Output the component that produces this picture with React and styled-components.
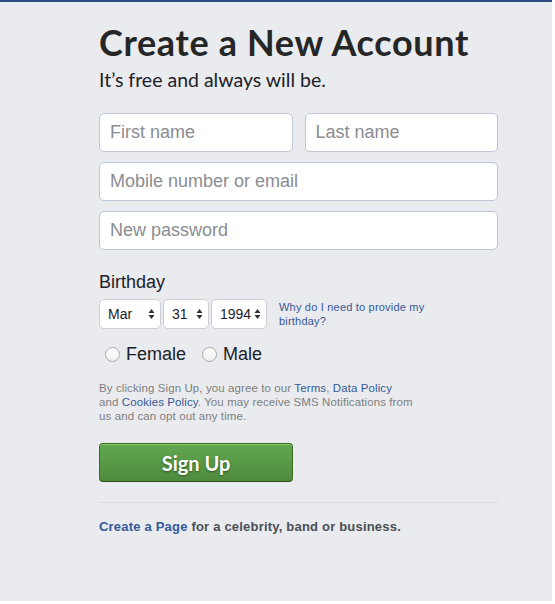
import React from 'react';
import styled, { createGlobalStyle } from 'styled-components';

const GlobalStyle = createGlobalStyle`
  html, body {
    margin: 0;
    padding: 0;
    background: #ffffff;
  }
`;

const Page = styled.div`
  width: calc(100% - 3px);
  height: 601px;
  box-sizing: border-box;
  background: #e9ebee;
  border-top: 2px solid #2d4b86;
  padding: 18px 0 0 99px;
  font-family: "Liberation Sans", Arial, sans-serif;
  color: #1d2129;
`;

const Form = styled.div`
  width: 399px;
  display: flex;
  flex-direction: column;
`;

const Title = styled.h1`
  margin: 0;
  font-family: Lato, "Open Sans", sans-serif;
  font-weight: 700;
  font-size: 36px;
  line-height: 44px;
  color: #262626;
  letter-spacing: 0.65px;
`;

const Subtitle = styled.p`
  margin: 4px 0 21px;
  font-family: Lato, "Open Sans", sans-serif;
  font-size: 19.5px;
  line-height: 24px;
  color: #1d2129;
`;

const Row = styled.div`
  display: flex;
  gap: 12px;
  margin-bottom: 10px;
`;

const TextInput = styled.input`
  flex: 1;
  min-width: 0;
  height: 39px;
  box-sizing: border-box;
  border: 1px solid #bdc7d8;
  border-radius: 5px;
  background: #ffffff;
  padding: 0 10px;
  font-family: "Liberation Sans", Arial, sans-serif;
  font-size: 18px;
  color: #1d2129;
  outline: none;

  &::placeholder {
    color: #8a8d91;
  }
`;

const Label = styled.div`
  margin-top: 10px;
  font-size: 18px;
  line-height: 24px;
  color: #1d2129;
`;

const BirthdayRow = styled.div`
  display: flex;
  align-items: center;
  gap: 2px;
  margin-top: 5px;
`;

const SelectBox = styled.div`
  width: ${p => p.$w}px;
  height: 30px;
  box-sizing: border-box;
  border: 1px solid #ccd0d5;
  border-radius: 5px;
  background: #ffffff;
  display: flex;
  align-items: center;
  justify-content: space-between;
  padding: 0 5px 0 8px;
  font-size: 14px;
  color: #1d2129;
`;

const Why = styled.a`
  margin-left: 10px;
  width: 165px;
  font-size: 11px;
  line-height: 14px;
  color: #365899;
  text-decoration: none;
  letter-spacing: 0.2px;
`;

const Genders = styled.div`
  display: flex;
  gap: 16px;
  margin: 13px 0 0 6px;
`;

const Gender = styled.label`
  display: flex;
  align-items: center;
  gap: 6px;
  font-size: 18px;
  line-height: 24px;
  color: #1d2129;
`;

const Radio = styled.span`
  width: 13px;
  height: 13px;
  border-radius: 50%;
  border: 1px solid #a8a8a8;
  background: linear-gradient(#ffffff, #f0f0f0);
`;

const Terms = styled.p`
  margin: 15px 0 0;
  font-size: 11.5px;
  line-height: 14px;
  color: #7f7f7f;
  letter-spacing: 0.1px;

  a {
    color: #365899;
    text-decoration: none;
  }
`;

const SignUp = styled.button`
  margin-top: 20px;
  width: 194px;
  height: 39px;
  box-sizing: border-box;
  border: 1px solid #3b6e22;
  border-bottom-color: #2c5115;
  border-radius: 4px;
  background: linear-gradient(#62a84f, #4f8a3c);
  box-shadow: inset 0 1px 0 rgba(164, 227, 136, 0.6);
  color: #ffffff;
  font-family: Lato, "Open Sans", sans-serif;
  font-weight: 700;
  font-size: 20px;
  text-shadow: 0 1px 2px rgba(0, 0, 0, 0.45);
  padding: 0;
`;

const Divider = styled.hr`
  margin: 20px 0 0;
  border: none;
  border-top: 1px solid #dadde1;
`;

const PageLink = styled.p`
  margin: 16px 0 0;
  font-size: 13px;
  font-weight: 700;
  line-height: 16px;
  color: #4b4f56;
  letter-spacing: 0.2px;

  a {
    color: #365899;
    text-decoration: none;
  }
`;

const Arrows = () => (
  <svg width="7" height="12" viewBox="0 0 7 12">
    <path d="M3.5 1 L6.5 5 L0.5 5 Z M3.5 11 L6.5 7 L0.5 7 Z" fill="#333" />
  </svg>
);

const App = () => (
  <Page>
    <GlobalStyle />
    <Form>
      <Title>Create a New Account</Title>
      <Subtitle>It’s free and always will be.</Subtitle>
      <Row>
        <TextInput placeholder="First name" />
        <TextInput placeholder="Last name" />
      </Row>
      <Row>
        <TextInput placeholder="Mobile number or email" />
      </Row>
      <Row>
        <TextInput type="password" placeholder="New password" />
      </Row>
      <Label>Birthday</Label>
      <BirthdayRow>
        <SelectBox $w={62}>Mar <Arrows /></SelectBox>
        <SelectBox $w={46}>31 <Arrows /></SelectBox>
        <SelectBox $w={56}>1994 <Arrows /></SelectBox>
        <Why href="#">Why do I need to provide my birthday?</Why>
      </BirthdayRow>
      <Genders>
        <Gender><Radio />Female</Gender>
        <Gender><Radio />Male</Gender>
      </Genders>
      <Terms>
        By clicking Sign Up, you agree to our <a href="#">Terms</a>, <a href="#">Data Policy</a>
        <br />
        and <a href="#">Cookies Policy</a>. You may receive SMS Notifications from
        <br />
        us and can opt out any time.
      </Terms>
      <SignUp>Sign Up</SignUp>
      <Divider />
      <PageLink>
        <a href="#">Create a Page</a> for a celebrity, band or business.
      </PageLink>
    </Form>
  </Page>
);

export default App;
